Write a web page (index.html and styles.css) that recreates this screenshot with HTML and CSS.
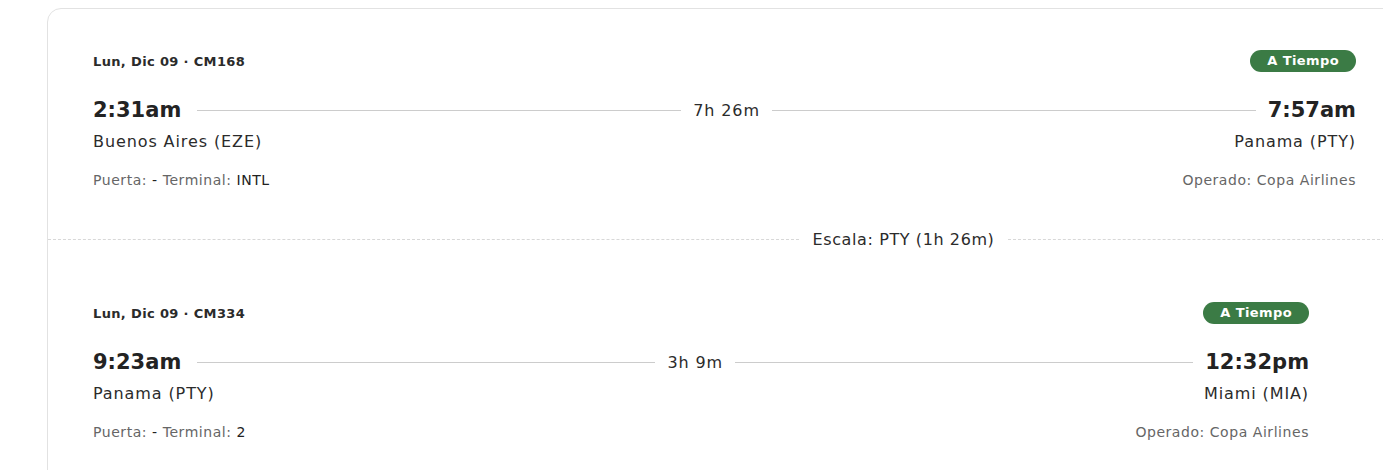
FILE: index.html
```html
<!DOCTYPE html>
<html lang="es">
<head>
<meta charset="utf-8">
<link rel="stylesheet" href="styles.css">
</head>
<body>
<div class="card">
  <section class="segment seg-1">
    <div class="row head">
      <span class="date">Lun, Dic 09 · CM168</span>
      <span class="badge">A Tiempo</span>
    </div>
    <div class="row times">
      <span class="time">2:31am</span>
      <span class="line"></span>
      <span class="dur">7h 26m</span>
      <span class="line"></span>
      <span class="time">7:57am</span>
    </div>
    <div class="row cities">
      <span class="city">Buenos Aires (EZE)</span>
      <span class="city">Panama (PTY)</span>
    </div>
    <div class="row info">
      <span class="meta">Puerta: <b>-</b> Terminal: <b>INTL</b></span>
      <span class="meta">Operado: Copa Airlines</span>
    </div>
  </section>
  <div class="stop">
    <span class="dash"></span>
    <span class="stop-text">Escala: PTY (1h 26m)</span>
    <span class="dash"></span>
  </div>
  <section class="segment seg-2">
    <div class="row head">
      <span class="date">Lun, Dic 09 · CM334</span>
      <span class="badge">A Tiempo</span>
    </div>
    <div class="row times">
      <span class="time">9:23am</span>
      <span class="line"></span>
      <span class="dur">3h 9m</span>
      <span class="line"></span>
      <span class="time">12:32pm</span>
    </div>
    <div class="row cities">
      <span class="city">Panama (PTY)</span>
      <span class="city">Miami (MIA)</span>
    </div>
    <div class="row info">
      <span class="meta">Puerta: <b>-</b> Terminal: <b>2</b></span>
      <span class="meta">Operado: Copa Airlines</span>
    </div>
  </section>
</div>
</body>
</html>
```

FILE: styles.css
```css
html, body {
  margin: 0;
  padding: 0;
  overflow: hidden;
  background: #ffffff;
}
body {
  padding: 8px 0 0 47px;
  font-family: "DejaVu Sans", "Liberation Sans", sans-serif;
  color: #2b2b2b;
}
.card {
  width: 1713px;
  height: 600px;
  border: 1px solid #e2e2e2;
  border-radius: 14px;
  box-sizing: border-box;
}
.segment {
  padding: 41px 0 0 45px;
}
.seg-1 { width: 1263px; }
.seg-2 { width: 1216px; padding-top: 53px; }
.row {
  display: flex;
  align-items: center;
  justify-content: space-between;
}
.head { height: 22px; }
.date {
  font-size: 13px;
  font-weight: 700;
  letter-spacing: 0.35px;
  color: #2b2b2b;
}
.badge {
  background: #3b7b45;
  color: #ffffff;
  font-size: 13px;
  font-weight: 700;
  letter-spacing: 0.4px;
  height: 22px;
  line-height: 22px;
  padding: 0 17px;
  border-radius: 11px;
}
.times {
  margin-top: 22px;
  height: 32px;
  gap: 12px;
}
.time {
  font-size: 21px;
  font-weight: 700;
  color: #232323;
}
.times .time:first-child { margin-right: 4px; }
.line {
  flex: 1;
  height: 1px;
  background: #cccccc;
}
.dur {
  font-size: 16px;
  letter-spacing: 0.9px;
  color: #2b2b2b;
}
.cities {
  height: 22px;
  margin-top: 4px;
}
.city {
  font-size: 16px;
  letter-spacing: 0.9px;
  color: #2b2b2b;
}
.info {
  margin-top: 18px;
  height: 20px;
}
.meta {
  font-size: 14px;
  letter-spacing: 0.55px;
  color: #666666;
}
.meta b {
  font-weight: 400;
  color: #222222;
}
.stop {
  display: flex;
  align-items: center;
  gap: 14px;
  margin-top: 39px;
  height: 20px;
}
.dash {
  flex: 1;
  border-top: 1px dashed #d8d8d8;
}
.stop-text {
  font-size: 16px;
  letter-spacing: 0.6px;
  color: #2b2b2b;
}
```
